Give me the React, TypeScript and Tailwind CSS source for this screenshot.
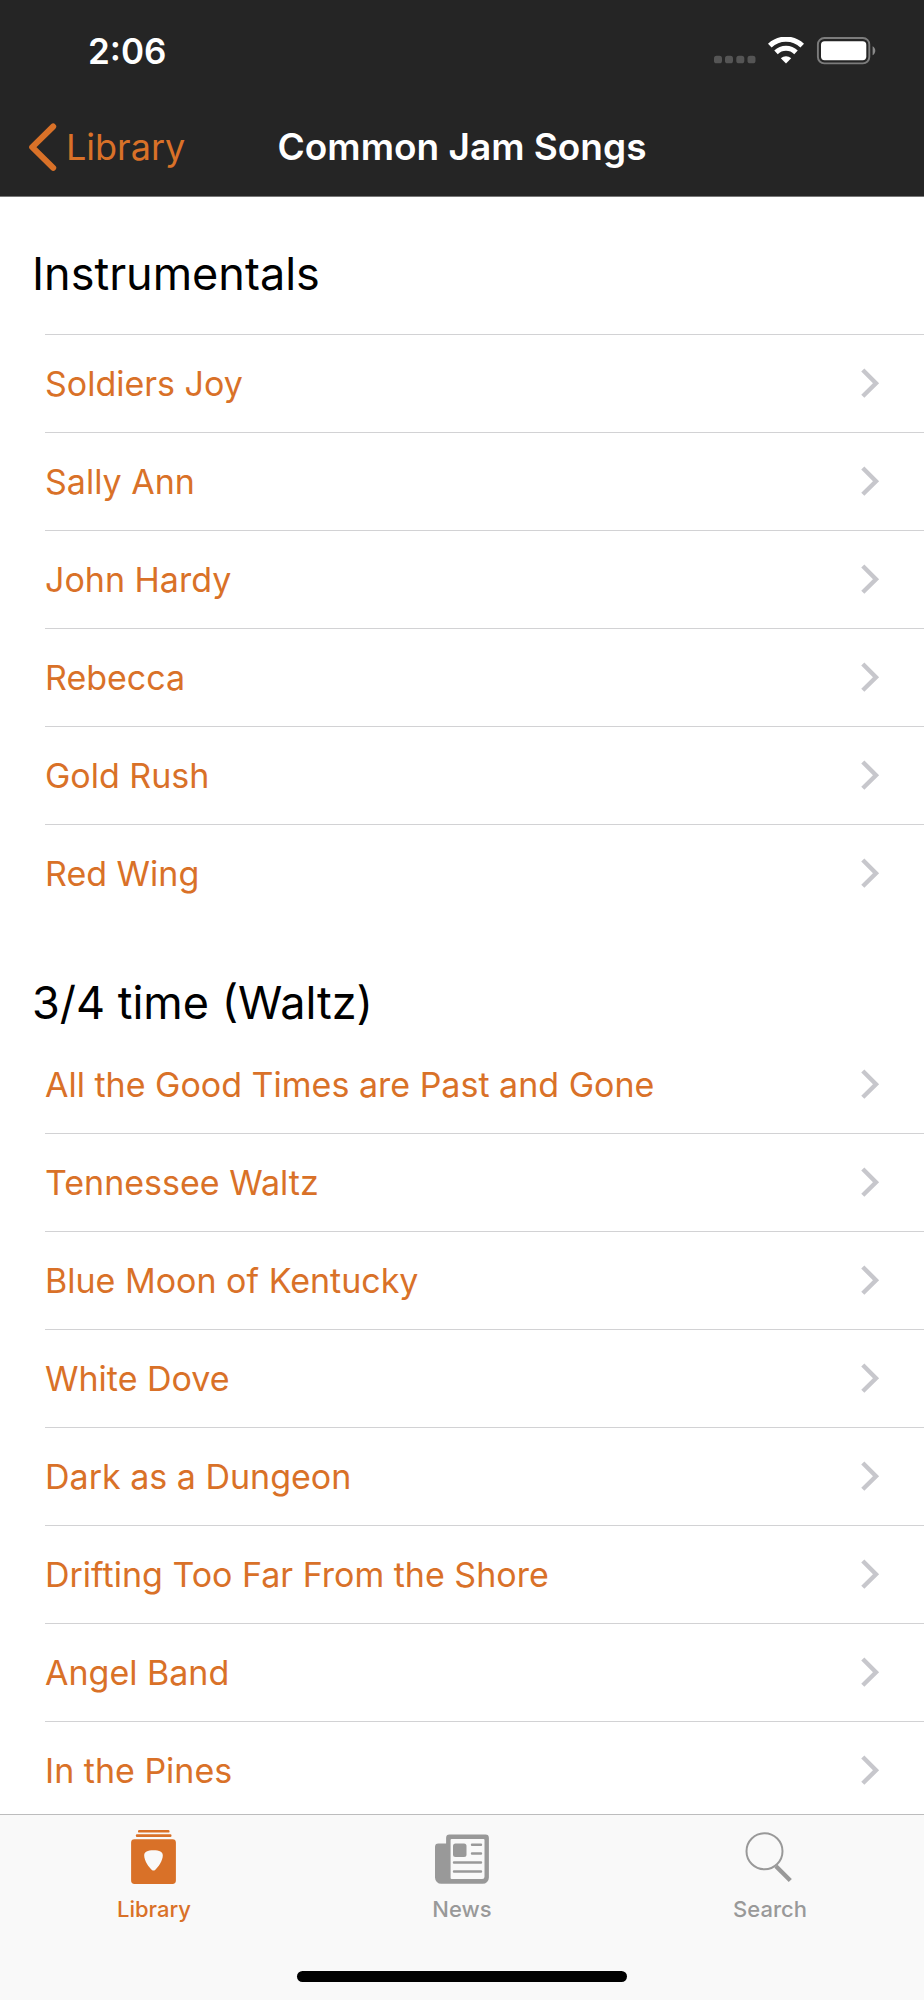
import { useState } from "react"

type TabId = "library" | "news" | "search"

const sections = [
  {
    title: "Instrumentals",
    songs: ["Soldiers Joy", "Sally Ann", "John Hardy", "Rebecca", "Gold Rush", "Red Wing"],
  },
  {
    title: "3/4 time (Waltz)",
    songs: [
      "All the Good Times are Past and Gone",
      "Tennessee Waltz",
      "Blue Moon of Kentucky",
      "White Dove",
      "Dark as a Dungeon",
      "Drifting Too Far From the Shore",
      "Angel Band",
      "In the Pines",
    ],
  },
]

function StatusBar() {
  return (
    <div className="flex h-[98px] items-center justify-between pt-1 pr-12 pl-22">
      <time className="text-[35px] leading-10 font-semibold">2:06</time>
      <div className="flex items-center">
        <svg className="h-7 w-[42px]" viewBox="0 0 42 28" fill="#555" aria-hidden="true">
          <rect x="0" y="18.8" width="8" height="7.5" rx="2.6" />
          <rect x="11" y="18.8" width="8" height="7.5" rx="2.6" />
          <rect x="22.3" y="18.8" width="8" height="7.5" rx="2.6" />
          <rect x="33.5" y="18.8" width="8" height="7.5" rx="2.6" />
        </svg>
        <svg className="ml-3 h-7 w-9" viewBox="0 0 36 28" fill="none" aria-hidden="true">
          <path d="M1.8 8.700a23.300 23.300 0 0 1 32.400 0" stroke="#fff" strokeWidth="5.200" />
          <path d="M8 15.400a14.400 14.400 0 0 1 20 0" stroke="#fff" strokeWidth="5" />
          <path d="M18 26.600l-5.200-5.300c2.900-2.700 7.500-2.700 10.400 0z" fill="#fff" />
        </svg>
        <svg className="ml-3 h-7 w-[60px]" viewBox="0 0 60 28" fill="none" aria-hidden="true">
          <rect x="1.900" y="1" width="51.400" height="25.400" rx="6.400" stroke="#7c7c7c" strokeWidth="1.900" />
          <rect x="5" y="4.200" width="45.300" height="19" rx="3.600" fill="#fff" />
          <path d="M56.600 9.200c3.600 1.700 3.600 7.300 0 9z" fill="#8a8a8a" />
        </svg>
      </div>
    </div>
  )
}

function NavBar() {
  return (
    <div className="grid h-[98px] grid-cols-[1fr_auto_1fr] items-center">
      <a href="#library" className="flex items-center pl-7 text-[36px] leading-12 text-[#d97128]">
        <svg className="mr-2 h-12 w-[30px]" viewBox="0 0 30 48" fill="none" aria-hidden="true">
          <path
            d="M25.2 3.5L4.2 24.2l21 20.6"
            stroke="currentColor"
            strokeWidth="6"
            strokeLinecap="round"
            strokeLinejoin="round"
          />
        </svg>
        Library
      </a>
      <h1 className="text-[37px] leading-12 font-semibold">Common Jam Songs</h1>
    </div>
  )
}

function SongRow({ name }: { name: string }) {
  return (
    <li className="ml-[45px] border-t border-[#d2d2d4]">
      <a
        href="#song"
        className="flex h-[97px] items-center justify-between pr-11 text-[34px] leading-12 text-[#d97128]"
      >
        {name}
        <svg className="h-8 w-5" viewBox="0 0 20 32" fill="none" aria-hidden="true">
          <path d="M2.8 2l13.2 13.2L2.8 28.300" stroke="#c7c7cc" strokeWidth="4.400" />
        </svg>
      </a>
    </li>
  )
}

function LibraryIcon() {
  return (
    <svg className="h-14 w-14" viewBox="0 0 56 56" fill="currentColor" aria-hidden="true">
      <rect x="12" y="1" width="31.5" height="2.6" rx="1.2" />
      <rect x="9.8" y="5.3" width="35.7" height="2.6" rx="1.2" />
      <path
        fillRule="evenodd"
        d="M8.500 10.200h38a3.400 3.400 0 0 1 3.400 3.400v38a3.400 3.400 0 0 1-3.400 3.400h-38a3.400 3.400 0 0 1-3.400-3.400v-38a3.400 3.400 0 0 1 3.400-3.400zM27.500 21.200c-6 0-9.300 1.400-9.300 5.300 0 5.200 4.700 12 7.700 14.400 1.100.9 2.100.9 3.200 0 3-2.400 7.700-9.200 7.700-14.400 0-3.900-3.300-5.300-9.300-5.300z"
      />
    </svg>
  )
}

function NewsIcon() {
  return (
    <svg className="h-14 w-14" viewBox="0 0 56 56" fill="currentColor" aria-hidden="true">
      <path
        fillRule="evenodd"
        d="M15.5 5.6h36a3.4 3.4 0 0 1 3.4 3.4v39.5a6.3 6.3 0 0 1-6.3 6.3H7.3A6.3 6.3 0 0 1 1 48.5V18a3.4 3.4 0 0 1 3.4-3.4h7.7V9a3.4 3.4 0 0 1 3.4-3.4zM17.6 9.9a1 1 0 0 0-1 1v38.2a1 1 0 0 0 1 1h30.6a2.3 2.3 0 0 0 2.3-2.3V10.900a1 1 0 0 0-1-1z"
      />
      <rect x="19" y="14.6" width="13.5" height="13.5" rx="2.5" />
      <path
        d="M38 15.7h9M38 24.5h9M20 33.5h27M20 42.5h27"
        stroke="currentColor"
        strokeWidth="2.4"
        strokeLinecap="round"
      />
    </svg>
  )
}

function SearchIcon() {
  return (
    <svg className="h-14 w-14" viewBox="0 0 56 56" fill="none" stroke="currentColor" aria-hidden="true">
      <circle cx="22.5" cy="22.3" r="18" strokeWidth="2" />
      <path d="M34 37.3l14.3 14.2" strokeWidth="4.4" />
    </svg>
  )
}

const tabs: { id: TabId; label: string; Icon: () => React.ReactElement }[] = [
  { id: "library", label: "Library", Icon: LibraryIcon },
  { id: "news", label: "News", Icon: NewsIcon },
  { id: "search", label: "Search", Icon: SearchIcon },
]

export default function App() {
  const [activeTab, setActiveTab] = useState<TabId>("library")

  return (
    <div className="flex h-screen flex-col bg-white font-['Inter','Liberation_Sans',sans-serif]">
      <header className="shrink-0 border-b border-[#777] bg-[#252525] text-white">
        <StatusBar />
        <NavBar />
      </header>

      <main className="min-h-0 flex-1 overflow-y-auto [scrollbar-width:none]">
        {sections.map(({ title, songs }) => (
          <section key={title} className="group">
            <h2 className="flex h-[113px] items-end pb-1 pl-8 text-[45px] leading-14 text-black group-first:h-[137px] group-first:pb-8">
              {title}
            </h2>
            <ul className="group-last:[&>li:first-child]:border-transparent">
              {songs.map((song) => (
                <SongRow key={song} name={song} />
              ))}
            </ul>
          </section>
        ))}
      </main>

      <footer className="shrink-0 border-t border-[#bcbcbd] bg-[#f9f9f9]">
        <nav className="grid h-[156px] grid-cols-3 items-start pt-[14px]">
          {tabs.map(({ id, label, Icon }) => (
            <button
              key={id}
              type="button"
              onClick={() => setActiveTab(id)}
              className={`flex flex-col items-center gap-2 text-[22px] leading-8 font-medium ${
                activeTab === id ? "text-[#d97128]" : "text-[#999]"
              }`}
            >
              <Icon />
              {label}
            </button>
          ))}
        </nav>
        <div className="mx-auto mb-[18px] h-[11px] w-[330px] rounded-full bg-black" />
      </footer>
    </div>
  )
}
